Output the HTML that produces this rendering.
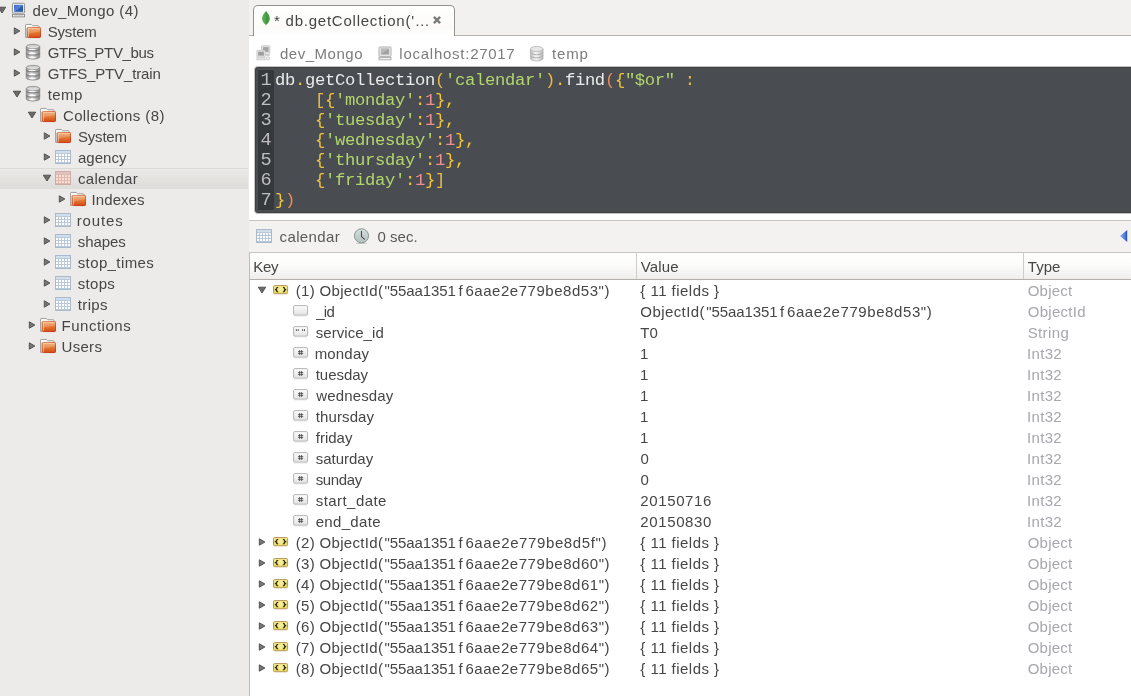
<!DOCTYPE html>
<html><head><meta charset="utf-8"><title>Robomongo</title>
<style>
html,body{margin:0;padding:0;width:1131px;height:696px;overflow:hidden}
body{width:1131px;height:696px;position:relative;overflow:hidden;background:#fff;font-family:"Liberation Sans",sans-serif;font-size:15px}
div,span,svg{position:absolute}
#side{left:0;top:0;width:249px;height:696px;background:#ecebe9}
#sel{left:0;top:168px;width:248px;height:21px;box-sizing:border-box;border-top:1px solid #dbdad7;background:linear-gradient(#eae9e7,#dedcd9)}
#tabbar{left:249px;top:0;width:882px;height:35px;background:#f2f1f0;border-bottom:1px solid #b6b3ae}
#tab{left:253px;top:5px;width:202px;height:31px;box-sizing:border-box;border:1px solid #939290;border-bottom:none;border-radius:5px 5px 0 0;background:linear-gradient(#fff,#fbfaf9 70%,#fff)}
#editor{left:254px;top:66px;width:877px;height:148px;background:#494c50;border-radius:4px 0 0 4px;border:1px solid #c4c2bf;border-right:none;box-sizing:border-box;box-shadow:inset 1px 1px 0 #3f4245,inset 0 -1px 0 #3f4245}
#gutter{left:3px;top:3px;width:16px;height:140px;background:#36393c}
.ln,.cl{font-family:"Liberation Mono",monospace;font-size:17.2px;letter-spacing:-.32px;line-height:20px;height:20px;white-space:pre}
.ln{left:258px;width:16px;color:#bdbdbd;font-size:18.6px;letter-spacing:0}
.ln .no{left:2.6px;top:1.7px}
.cl{left:275px;color:#ececec;padding-top:1.5px}
.cl span{position:static}
#rbar{left:249px;top:220px;width:882px;height:32px;background:#f3f2f1;border-top:1px solid #c6c4c0;box-sizing:content-box}
#thead{left:250px;top:252px;width:881px;height:26px;border-top:1px solid #c9c6c1;border-bottom:1px solid #b3afa9;background:linear-gradient(#fff,#fcfcfb 45%,#efeeec)}
#thead i{position:absolute;top:0;width:1px;height:26px;background:#d0cdc8}
#tleft{left:249px;top:252px;width:1px;height:444px;background:#bfbcb7}
.t{white-space:pre;line-height:21px;height:21px}
.i{overflow:visible}
#code,#txt{left:0;top:0;width:1131px;height:696px;will-change:transform}

</style></head>
<body>
<svg width="0" height="0" style="position:absolute">
<defs>
<linearGradient id="gfo" x1="0" y1="0" x2="0" y2="1"><stop offset="0" stop-color="#efa96f"/><stop offset=".5" stop-color="#e27a34"/><stop offset="1" stop-color="#d54a14"/></linearGradient>
<linearGradient id="gfs" x1="0" y1="0" x2=".6" y2="1"><stop offset="0" stop-color="#e0824f"/><stop offset="1" stop-color="#c42c0a"/></linearGradient>
<linearGradient id="gsc" x1="0" y1="0" x2="1" y2="1"><stop offset="0" stop-color="#3c6cc4"/><stop offset=".5" stop-color="#5a86d0"/><stop offset=".55" stop-color="#2f5cb4"/><stop offset="1" stop-color="#2a55ad"/></linearGradient>
<linearGradient id="gdb" x1="0" y1="0" x2="1" y2="0"><stop offset="0" stop-color="#949494"/><stop offset=".42" stop-color="#eeeeee"/><stop offset="1" stop-color="#868686"/></linearGradient>
<linearGradient id="gdt" x1="0" y1="0" x2="0" y2="1"><stop offset="0" stop-color="#c2c2c2"/><stop offset="1" stop-color="#ececec"/></linearGradient>
<linearGradient id="gdbl" x1="0" y1="0" x2="1" y2="0"><stop offset="0" stop-color="#bdbdbd"/><stop offset=".45" stop-color="#f8f8f8"/><stop offset="1" stop-color="#b8b8b8"/></linearGradient>
<linearGradient id="gob" x1="0" y1="0" x2="0" y2="1"><stop offset="0" stop-color="#f5eb8e"/><stop offset="1" stop-color="#e5d658"/></linearGradient>
<linearGradient id="gfl" x1="0" y1="0" x2="0" y2="1"><stop offset="0" stop-color="#fdfdfd"/><stop offset="1" stop-color="#e2e2e2"/></linearGradient>
<linearGradient id="gck" x1="0" y1="0" x2="0" y2="1"><stop offset="0" stop-color="#d6dfde"/><stop offset="1" stop-color="#b3c1bf"/></linearGradient>
<linearGradient id="gtr" x1="0" y1="0" x2="1" y2="0"><stop offset="0" stop-color="#8db0ec"/><stop offset=".7" stop-color="#4a7ad8"/><stop offset="1" stop-color="#1a48b4"/></linearGradient>
<linearGradient id="glf" x1="0" y1="0" x2="1" y2="0"><stop offset="0" stop-color="#58b04e"/><stop offset=".5" stop-color="#4da548"/><stop offset=".52" stop-color="#3f9440"/><stop offset="1" stop-color="#46a046"/></linearGradient>

<symbol id="ac" overflow="visible"><path d="M1.3 1.8 L6.9 5 L1.3 8.2 Z" fill="#777775" stroke="#4a4a48" stroke-width=".9" stroke-linejoin="round"/></symbol>
<symbol id="ae" overflow="visible"><path d="M1.3 1.2 L8.7 1.2 L5 7 Z" fill="#6c6c6a" stroke="#4a4a48" stroke-width=".9" stroke-linejoin="round"/></symbol>

<symbol id="pc" overflow="visible">
 <rect x="2.45" y="3.25" width="12.1" height="9.8" rx="1" fill="#f7f7f6" stroke="#858582" stroke-width=".9"/>
 <rect x="4" y="4.8" width="9.1" height="7" fill="url(#gsc)"/>
 <rect x="2.45" y="14.35" width="12.1" height="2.5" fill="#f6f6f5" stroke="#858582" stroke-width=".9"/>
 <rect x="4" y="15.2" width="9" height=".8" fill="#cfcfcd"/>
</symbol>

<symbol id="folder" overflow="visible">
 <path d="M.6 16.4 V4.1 Q.6 3.45 1.25 3.45 H6.3 L7.5 4.75 H13.2 Q13.9 4.75 13.9 5.4 V7 H2 V16.4 Z" fill="#fefefe" stroke="#8e8e8b" stroke-width=".85" stroke-linejoin="round"/>
 <rect x="2.45" y="6.45" width="13" height="10.1" rx=".7" fill="url(#gfo)" stroke="url(#gfs)" stroke-width=".9"/>
 <path d="M3 7 H15 V10.2 L3 12.8 Z" fill="#fff" opacity=".16"/>
 <path d="M3.4 15.8 V7.4 H14.6" fill="none" stroke="#fbd6b4" stroke-width=".8" opacity=".85"/>
</symbol>

<symbol id="db" overflow="visible">
 <path d="M1.3 4.5 V14.9 A6.7 2.1 0 0 0 14.7 14.9 V4.5 Z" fill="url(#gdb)"/>
 <ellipse cx="8" cy="4.5" rx="6.7" ry="2.15" fill="url(#gdt)" stroke="#8a8a8a" stroke-width=".8"/>
 <ellipse cx="7.2" cy="7.5" rx="3.4" ry=".85" fill="#fff" opacity=".9"/>
 <ellipse cx="7.2" cy="11.7" rx="3.4" ry=".85" fill="#fff" opacity=".9"/>
 <ellipse cx="7.2" cy="15.8" rx="3.4" ry=".85" fill="#fff" opacity=".9"/>
 <path d="M1.3 6.7 A6.7 2.1 0 0 0 14.7 6.7" fill="none" stroke="#787878" stroke-width="1.15"/>
 <path d="M1.3 10.9 A6.7 2.1 0 0 0 14.7 10.9" fill="none" stroke="#787878" stroke-width="1.15"/>
 <path d="M1.3 4.5 V14.9 A6.7 2.1 0 0 0 14.7 14.9 V4.5" fill="none" stroke="#848484" stroke-width=".85"/>
</symbol>
<symbol id="dbg" overflow="visible">
 <path d="M1.4 4 V13.4 A6.3 2.5 0 0 0 14 13.4 V4 Z" fill="url(#gdbl)"/>
 <ellipse cx="7.7" cy="4" rx="6.3" ry="2.6" fill="#e6e6e6" stroke="#b4b4b4" stroke-width=".8"/>
 <path d="M1.4 7.2 A6.3 2.5 0 0 0 14 7.2" fill="none" stroke="#adadad" stroke-width="1"/>
 <path d="M1.4 10.3 A6.3 2.5 0 0 0 14 10.3" fill="none" stroke="#adadad" stroke-width="1"/>
 <path d="M1.4 4 V13.4 A6.3 2.5 0 0 0 14 13.4 V4" fill="none" stroke="#b4b4b4" stroke-width=".8"/>
</symbol>

<symbol id="tbl" overflow="visible">
 <rect x="0" y="0" width="16" height="14" fill="#b9c9d9"/>
 <rect x=".5" y=".5" width="15" height="13" fill="none" stroke="#a8bacc"/>
 <rect x="1" y="1" width="14" height="2" fill="#d1deeb"/>
 <g fill="#fff"><rect x="1" y="4" width="2" height="2"/><rect x="4" y="4" width="2" height="2"/><rect x="7" y="4" width="2" height="2"/><rect x="10" y="4" width="2" height="2"/><rect x="13" y="4" width="2" height="2"/>
 <rect x="1" y="7" width="2" height="2"/><rect x="4" y="7" width="2" height="2"/><rect x="7" y="7" width="2" height="2"/><rect x="10" y="7" width="2" height="2"/><rect x="13" y="7" width="2" height="2"/>
 <rect x="1" y="10" width="2" height="2"/><rect x="4" y="10" width="2" height="2"/><rect x="7" y="10" width="2" height="2"/><rect x="10" y="10" width="2" height="2"/><rect x="13" y="10" width="2" height="2"/></g>
</symbol>
<symbol id="tblsel" overflow="visible">
 <rect x="0" y="0" width="16" height="14" fill="#d9bab3"/>
 <rect x=".5" y=".5" width="15" height="13" fill="none" stroke="#ccada6"/>
 <rect x="1" y="1" width="14" height="2" fill="#e0c5be"/>
 <g fill="#ffdccf"><rect x="1" y="4" width="2" height="2"/><rect x="4" y="4" width="2" height="2"/><rect x="7" y="4" width="2" height="2"/><rect x="10" y="4" width="2" height="2"/><rect x="13" y="4" width="2" height="2"/>
 <rect x="1" y="7" width="2" height="2"/><rect x="4" y="7" width="2" height="2"/><rect x="7" y="7" width="2" height="2"/><rect x="10" y="7" width="2" height="2"/><rect x="13" y="7" width="2" height="2"/>
 <rect x="1" y="10" width="2" height="2"/><rect x="4" y="10" width="2" height="2"/><rect x="7" y="10" width="2" height="2"/><rect x="10" y="10" width="2" height="2"/><rect x="13" y="10" width="2" height="2"/></g>
</symbol>

<symbol id="obj" overflow="visible">
 <rect x=".5" y=".55" width="14.1" height="8.2" rx="1.2" fill="url(#gob)" stroke="#b3925a" stroke-width=".95"/>
 <ellipse cx="7.5" cy="4.7" rx="2.4" ry="3" fill="#fbf5b0" opacity=".55"/>
 <path d="M5.2 2.5 H4.3 Q3.7 2.5 3.7 3.2 V4 L2.3 4.6 L3.7 5.2 V6 Q3.7 6.7 4.3 6.7 H5.2 M9.9 2.5 H10.8 Q11.4 2.5 11.4 3.2 V4 L12.8 4.6 L11.4 5.2 V6 Q11.4 6.7 10.8 6.7 H9.9" fill="none" stroke="#2b2a14" stroke-width="1.15" stroke-linejoin="round"/>
</symbol>
<symbol id="fld" overflow="visible">
 <rect x=".6" y=".6" width="14" height="9.6" rx="1.3" fill="url(#gfl)" stroke="#adadad" stroke-width=".9"/>
 <path d="M1.2 10.9 H14" stroke="#d9d9d9" stroke-width=".8"/>
</symbol>
<symbol id="str" overflow="visible">
 <rect x=".6" y=".6" width="14" height="9.6" rx="1.3" fill="url(#gfl)" stroke="#adadad" stroke-width=".9"/>
 <path d="M1.2 10.9 H14" stroke="#d9d9d9" stroke-width=".8"/>
 <path d="M3.4 3.2 V5 M5.3 3.2 V5 M9.6 3.2 V5 M11.5 3.2 V5" stroke="#555" stroke-width="1"/>
</symbol>
<symbol id="num" overflow="visible">
 <rect x=".6" y=".6" width="14" height="9.6" rx="1.3" fill="url(#gfl)" stroke="#adadad" stroke-width=".9"/>
 <path d="M1.2 10.9 H14" stroke="#d9d9d9" stroke-width=".8"/>
 <path d="M6.6 3 V8 M8.6 3 V8 M5 4.6 H10.2 M5 6.4 H10.2" stroke="#555" stroke-width=".9"/>
</symbol>

<symbol id="leaf" overflow="visible">
 <rect x="4.5" y="14.4" width=".9" height="2.1" fill="#e6dfc8"/>
 <path d="M4.95 1.1 C7.2 3.8 8.8 6.2 8.8 8.6 C8.8 11.6 6.9 13.8 4.95 14.9 C3 13.8 1.1 11.6 1.1 8.6 C1.1 6.2 2.7 3.8 4.95 1.1 Z" fill="url(#glf)"/>
</symbol>
<symbol id="x" overflow="visible">
 <path d="M1.9 1.9 L8.1 8.1 M8.1 1.9 L1.9 8.1" stroke="#7d7d79" stroke-width="2.5" stroke-linecap="butt"/>
</symbol>
<symbol id="conn" overflow="visible">
 <rect x="5.6" y=".8" width="8.2" height="8.8" rx=".6" fill="#e6e6e6" stroke="#c6c6c6" stroke-width=".9"/>
 <rect x="7" y="2.1" width="5.6" height="5" fill="#a3a3a3"/>
 <rect x=".9" y="5.4" width="8.2" height="6.6" rx=".6" fill="#e9e9e9" stroke="#c6c6c6" stroke-width=".9"/>
 <rect x="2.1" y="6.7" width="5.8" height="4" fill="#9e9e9e"/>
 <rect x=".9" y="12.7" width="8.2" height="2.2" fill="#e4e4e4" stroke="#cacaca" stroke-width=".8"/>
 <path d="M9.6 10.6 H13.6 M9.6 13.8 H11" stroke="#c8c8c8" stroke-width="1"/>
 <circle cx="12.1" cy="13.3" r="1.6" fill="#f2f2f2" stroke="#c6c6c6" stroke-width=".8"/>
</symbol>
<symbol id="mon" overflow="visible">
 <rect x="1" y="1" width="12" height="9.4" rx=".8" fill="#ededed" stroke="#a9a9a9" stroke-width=".9"/>
 <rect x="2.8" y="2.6" width="8.4" height="6" fill="#a3a3a3"/>
 <path d="M3 7.5 L10.8 3 V2.8 H3 Z" fill="#b9b9b9"/>
 <rect x="1" y="11.4" width="12" height="2.4" fill="#f0f0f0" stroke="#a9a9a9" stroke-width=".9"/>
</symbol>
<symbol id="clock" overflow="visible">
 <ellipse cx="8.5" cy="16.2" rx="5.8" ry=".8" fill="#c9c9c6"/>
 <circle cx="8.5" cy="8.8" r="7.05" fill="url(#gck)" stroke="#818d8b" stroke-width=".9"/>
 <path d="M8.5 4.3 V9.6 L11.4 12.1" fill="none" stroke="#454a48" stroke-width="1.1" stroke-linecap="round"/>
</symbol>
<symbol id="tri" overflow="visible">
 <path d="M1 7 L8.2 1 V13 Z" fill="url(#gtr)"/>
</symbol>
</defs>
</svg>

<div id="side"></div>
<div id="sel"></div>
<div id="tabbar"></div>
<div id="tab"></div>
<div id="editor"><div id="gutter"></div></div>
<div id="code"><div class="ln" style="top:69px"><span class="no">1</span></div><div class="cl" style="top:69px"><span style="color:#ebebeb">db</span><span style="color:#f2c53c">.</span><span style="color:#ebebeb">getCollection</span><span style="color:#eeb846">(</span><span style="color:#b3d66c">&#x27;calendar&#x27;</span><span style="color:#eeb846">)</span><span style="color:#f2c53c">.</span><span style="color:#ebebeb">find</span><span style="color:#e98a5c">(</span><span style="color:#f2c53c">{</span><span style="color:#b3d66c">&quot;$or&quot;</span> <span style="color:#eeb846">:</span></div><div class="ln" style="top:89px"><span class="no">2</span></div><div class="cl" style="top:89px">    <span style="color:#eeb846">[</span><span style="color:#f2c53c">{</span><span style="color:#b3d66c">&#x27;monday&#x27;</span><span style="color:#f2c53c">:</span><span style="color:#ef9090">1</span><span style="color:#f2c53c">}</span><span style="color:#f2c53c">,</span></div><div class="ln" style="top:109px"><span class="no">3</span></div><div class="cl" style="top:109px">    <span style="color:#f2c53c">{</span><span style="color:#b3d66c">&#x27;tuesday&#x27;</span><span style="color:#f2c53c">:</span><span style="color:#ef9090">1</span><span style="color:#f2c53c">}</span><span style="color:#f2c53c">,</span></div><div class="ln" style="top:129px"><span class="no">4</span></div><div class="cl" style="top:129px">    <span style="color:#f2c53c">{</span><span style="color:#b3d66c">&#x27;wednesday&#x27;</span><span style="color:#f2c53c">:</span><span style="color:#ef9090">1</span><span style="color:#f2c53c">}</span><span style="color:#f2c53c">,</span></div><div class="ln" style="top:149px"><span class="no">5</span></div><div class="cl" style="top:149px">    <span style="color:#f2c53c">{</span><span style="color:#b3d66c">&#x27;thursday&#x27;</span><span style="color:#f2c53c">:</span><span style="color:#ef9090">1</span><span style="color:#f2c53c">}</span><span style="color:#f2c53c">,</span></div><div class="ln" style="top:169px"><span class="no">6</span></div><div class="cl" style="top:169px">    <span style="color:#f2c53c">{</span><span style="color:#b3d66c">&#x27;friday&#x27;</span><span style="color:#f2c53c">:</span><span style="color:#ef9090">1</span><span style="color:#f2c53c">}</span><span style="color:#eeb846">]</span></div><div class="ln" style="top:189px"><span class="no">7</span></div><div class="cl" style="top:189px"><span style="color:#f2c53c">}</span><span style="color:#e98a5c">)</span></div></div>
<div id="rbar"></div>
<div id="thead"><i style="left:386px"></i><i style="left:773px"></i></div>
<div id="tleft"></div>
<svg class="i" style="left:-2.9000000000000004px;top:6.3px" width="10" height="8"><use href="#ae"/></svg><svg class="i" style="left:10px;top:0px" width="18" height="21"><use href="#pc"/></svg><svg class="i" style="left:13.0px;top:26.2px" width="8" height="10"><use href="#ac"/></svg><svg class="i" style="left:25px;top:21px" width="18" height="21"><use href="#folder"/></svg><svg class="i" style="left:13.0px;top:47.2px" width="8" height="10"><use href="#ac"/></svg><svg class="i" style="left:25px;top:42px" width="16" height="18"><use href="#db"/></svg><svg class="i" style="left:13.0px;top:68.2px" width="8" height="10"><use href="#ac"/></svg><svg class="i" style="left:25px;top:63px" width="16" height="18"><use href="#db"/></svg><svg class="i" style="left:12.1px;top:90.3px" width="10" height="8"><use href="#ae"/></svg><svg class="i" style="left:25px;top:84px" width="16" height="18"><use href="#db"/></svg><svg class="i" style="left:27.1px;top:111.3px" width="10" height="8"><use href="#ae"/></svg><svg class="i" style="left:40px;top:105px" width="18" height="21"><use href="#folder"/></svg><svg class="i" style="left:43.0px;top:131.2px" width="8" height="10"><use href="#ac"/></svg><svg class="i" style="left:55px;top:126px" width="18" height="21"><use href="#folder"/></svg><svg class="i" style="left:43.0px;top:152.2px" width="8" height="10"><use href="#ac"/></svg><svg class="i" style="left:55px;top:150px" width="16" height="14"><use href="#tbl"/></svg><svg class="i" style="left:42.1px;top:174.3px" width="10" height="8"><use href="#ae"/></svg><svg class="i" style="left:55px;top:171px" width="16" height="14"><use href="#tblsel"/></svg><svg class="i" style="left:58.0px;top:194.2px" width="8" height="10"><use href="#ac"/></svg><svg class="i" style="left:70px;top:189px" width="18" height="21"><use href="#folder"/></svg><svg class="i" style="left:43.0px;top:215.2px" width="8" height="10"><use href="#ac"/></svg><svg class="i" style="left:55px;top:213px" width="16" height="14"><use href="#tbl"/></svg><svg class="i" style="left:43.0px;top:236.2px" width="8" height="10"><use href="#ac"/></svg><svg class="i" style="left:55px;top:234px" width="16" height="14"><use href="#tbl"/></svg><svg class="i" style="left:43.0px;top:257.2px" width="8" height="10"><use href="#ac"/></svg><svg class="i" style="left:55px;top:255px" width="16" height="14"><use href="#tbl"/></svg><svg class="i" style="left:43.0px;top:278.2px" width="8" height="10"><use href="#ac"/></svg><svg class="i" style="left:55px;top:276px" width="16" height="14"><use href="#tbl"/></svg><svg class="i" style="left:43.0px;top:299.2px" width="8" height="10"><use href="#ac"/></svg><svg class="i" style="left:55px;top:297px" width="16" height="14"><use href="#tbl"/></svg><svg class="i" style="left:28.0px;top:320.2px" width="8" height="10"><use href="#ac"/></svg><svg class="i" style="left:40px;top:315px" width="18" height="21"><use href="#folder"/></svg><svg class="i" style="left:28.0px;top:341.2px" width="8" height="10"><use href="#ac"/></svg><svg class="i" style="left:40px;top:336px" width="18" height="21"><use href="#folder"/></svg><svg class="i" style="left:257.3px;top:286.1px" width="10" height="8"><use href="#ae"/></svg><svg class="i" style="left:273px;top:284.8px" width="15" height="10"><use href="#obj"/></svg><svg class="i" style="left:293px;top:304.9px" width="16" height="13"><use href="#fld"/></svg><svg class="i" style="left:293px;top:325.9px" width="16" height="13"><use href="#str"/></svg><svg class="i" style="left:293px;top:346.9px" width="16" height="13"><use href="#num"/></svg><svg class="i" style="left:293px;top:367.9px" width="16" height="13"><use href="#num"/></svg><svg class="i" style="left:293px;top:388.9px" width="16" height="13"><use href="#num"/></svg><svg class="i" style="left:293px;top:409.9px" width="16" height="13"><use href="#num"/></svg><svg class="i" style="left:293px;top:430.9px" width="16" height="13"><use href="#num"/></svg><svg class="i" style="left:293px;top:451.9px" width="16" height="13"><use href="#num"/></svg><svg class="i" style="left:293px;top:472.9px" width="16" height="13"><use href="#num"/></svg><svg class="i" style="left:293px;top:493.9px" width="16" height="13"><use href="#num"/></svg><svg class="i" style="left:293px;top:514.9px" width="16" height="13"><use href="#num"/></svg><svg class="i" style="left:258px;top:537.3px" width="8" height="10"><use href="#ac"/></svg><svg class="i" style="left:273px;top:536.8px" width="15" height="10"><use href="#obj"/></svg><svg class="i" style="left:258px;top:558.3px" width="8" height="10"><use href="#ac"/></svg><svg class="i" style="left:273px;top:557.8px" width="15" height="10"><use href="#obj"/></svg><svg class="i" style="left:258px;top:579.3px" width="8" height="10"><use href="#ac"/></svg><svg class="i" style="left:273px;top:578.8px" width="15" height="10"><use href="#obj"/></svg><svg class="i" style="left:258px;top:600.3px" width="8" height="10"><use href="#ac"/></svg><svg class="i" style="left:273px;top:599.8px" width="15" height="10"><use href="#obj"/></svg><svg class="i" style="left:258px;top:621.3px" width="8" height="10"><use href="#ac"/></svg><svg class="i" style="left:273px;top:620.8px" width="15" height="10"><use href="#obj"/></svg><svg class="i" style="left:258px;top:642.3px" width="8" height="10"><use href="#ac"/></svg><svg class="i" style="left:273px;top:641.8px" width="15" height="10"><use href="#obj"/></svg><svg class="i" style="left:258px;top:663.3px" width="8" height="10"><use href="#ac"/></svg><svg class="i" style="left:273px;top:662.8px" width="15" height="10"><use href="#obj"/></svg><svg class="i" style="left:261px;top:10px" width="10" height="18"><use href="#leaf"/></svg><svg class="i" style="left:432px;top:15px" width="10" height="10"><use href="#x"/></svg><svg class="i" style="left:256px;top:45px" width="15" height="16"><use href="#conn"/></svg><svg class="i" style="left:378px;top:46px" width="15" height="15"><use href="#mon"/></svg><svg class="i" style="left:529px;top:45px" width="16" height="16"><use href="#dbg"/></svg><svg class="i" style="left:256px;top:229px" width="16" height="14"><use href="#tbl"/></svg><svg class="i" style="left:353px;top:227px" width="17" height="17"><use href="#clock"/></svg><svg class="i" style="left:1119px;top:229px" width="9" height="14"><use href="#tri"/></svg>
<div id="txt"><span class="t" style="left:32.60px;top:0px;letter-spacing:0.417px;color:#464646">dev_Mongo (4)</span><span class="t" style="left:47.70px;top:21px;letter-spacing:-0.183px;color:#464646">System</span><span class="t" style="left:47.70px;top:42px;letter-spacing:-0.331px;color:#464646">GTFS_PTV_bus</span><span class="t" style="left:47.70px;top:63px;letter-spacing:-0.153px;color:#464646">GTFS_PTV_train</span><span class="t" style="left:47.70px;top:84px;letter-spacing:0.432px;color:#464646">temp</span><span class="t" style="left:62.90px;top:105px;letter-spacing:0.402px;color:#464646">Collections (8)</span><span class="t" style="left:78.00px;top:126px;letter-spacing:-0.203px;color:#464646">System</span><span class="t" style="left:78.00px;top:147px;letter-spacing:0.006px;color:#464646">agency</span><span class="t" style="left:78.00px;top:168px;letter-spacing:0.308px;color:#464646">calendar</span><span class="t" style="left:91.60px;top:189px;letter-spacing:0.061px;color:#464646">Indexes</span><span class="t" style="left:76.70px;top:210px;letter-spacing:0.862px;color:#464646">routes</span><span class="t" style="left:77.70px;top:231px;letter-spacing:-0.054px;color:#464646">shapes</span><span class="t" style="left:77.70px;top:252px;letter-spacing:0.396px;color:#464646">stop_times</span><span class="t" style="left:77.70px;top:273px;letter-spacing:0.312px;color:#464646">stops</span><span class="t" style="left:77.70px;top:294px;letter-spacing:0.391px;color:#464646">trips</span><span class="t" style="left:61.50px;top:315px;letter-spacing:0.521px;color:#464646">Functions</span><span class="t" style="left:61.50px;top:336px;letter-spacing:0.308px;color:#464646">Users</span><span class="t" style="left:274.00px;top:10px;letter-spacing:0.768px;color:#464646">* db.getCollection(&#x27;…</span><span class="t" style="left:279.90px;top:43px;letter-spacing:0.531px;color:#7c7c7c">dev_Mongo</span><span class="t" style="left:399.30px;top:43px;letter-spacing:0.755px;color:#7c7c7c">localhost:</span><span class="t" style="left:470.20px;top:43px;letter-spacing:0.683px;color:#7c7c7c">27017</span><span class="t" style="left:552.10px;top:43px;letter-spacing:0.798px;color:#7c7c7c">temp</span><span class="t" style="left:279.60px;top:226px;letter-spacing:0.365px;color:#595959">calendar</span><span class="t" style="left:377.40px;top:226px;letter-spacing:0.070px;color:#595959">0 sec.</span><span class="t" style="left:253.30px;top:256px;letter-spacing:-0.324px;color:#464646">Key</span><span class="t" style="left:640.80px;top:256px;letter-spacing:0.123px;color:#464646">Value</span><span class="t" style="left:1027.80px;top:256px;letter-spacing:0.041px;color:#464646">Type</span><span class="t" style="left:295.80px;top:280px;letter-spacing:0.312px;color:#464646">(1) ObjectId(</span><span class="t" style="left:384.60px;top:280px;letter-spacing:-0.090px;color:#464646">&quot;55aa1351</span><span class="t" style="left:458.50px;top:280px;letter-spacing:0.000px;color:#464646">f</span><span class="t" style="left:465.40px;top:280px;letter-spacing:0.540px;color:#464646">6aae2e779be8d53&quot;)</span><span class="t" style="left:640.30px;top:280px;letter-spacing:0.475px;color:#464646">{ 11 fields }</span><span class="t" style="left:1027.70px;top:280px;letter-spacing:0.223px;color:#a7a7ad">Object</span><span class="t" style="left:316.30px;top:301px;letter-spacing:-0.787px;color:#464646">_id</span><span class="t" style="left:640.30px;top:301px;letter-spacing:0.417px;color:#464646">ObjectId(</span><span class="t" style="left:706.20px;top:301px;letter-spacing:-0.090px;color:#464646">&quot;55aa1351</span><span class="t" style="left:780.10px;top:301px;letter-spacing:0.000px;color:#464646">f</span><span class="t" style="left:787.00px;top:301px;letter-spacing:0.578px;color:#464646">6aae2e779be8d53&quot;)</span><span class="t" style="left:1027.70px;top:301px;letter-spacing:0.297px;color:#a7a7ad">ObjectId</span><span class="t" style="left:315.70px;top:322px;letter-spacing:0.057px;color:#464646">service_id</span><span class="t" style="left:640.30px;top:322px;letter-spacing:-0.063px;color:#464646">T0</span><span class="t" style="left:1027.70px;top:322px;letter-spacing:0.372px;color:#a7a7ad">String</span><span class="t" style="left:314.70px;top:343px;letter-spacing:0.167px;color:#464646">monday</span><span class="t" style="left:640.10px;top:343px;letter-spacing:0.000px;color:#464646">1</span><span class="t" style="left:1027.00px;top:343px;letter-spacing:0.320px;color:#a7a7ad">Int32</span><span class="t" style="left:315.70px;top:364px;letter-spacing:-0.023px;color:#464646">tuesday</span><span class="t" style="left:640.10px;top:364px;letter-spacing:0.000px;color:#464646">1</span><span class="t" style="left:1027.00px;top:364px;letter-spacing:0.320px;color:#a7a7ad">Int32</span><span class="t" style="left:316.30px;top:385px;letter-spacing:0.127px;color:#464646">wednesday</span><span class="t" style="left:640.10px;top:385px;letter-spacing:0.000px;color:#464646">1</span><span class="t" style="left:1027.00px;top:385px;letter-spacing:0.320px;color:#a7a7ad">Int32</span><span class="t" style="left:315.70px;top:406px;letter-spacing:0.124px;color:#464646">thursday</span><span class="t" style="left:640.10px;top:406px;letter-spacing:0.000px;color:#464646">1</span><span class="t" style="left:1027.00px;top:406px;letter-spacing:0.320px;color:#a7a7ad">Int32</span><span class="t" style="left:315.70px;top:427px;letter-spacing:0.024px;color:#464646">friday</span><span class="t" style="left:640.10px;top:427px;letter-spacing:0.000px;color:#464646">1</span><span class="t" style="left:1027.00px;top:427px;letter-spacing:0.320px;color:#a7a7ad">Int32</span><span class="t" style="left:315.70px;top:448px;letter-spacing:-0.005px;color:#464646">saturday</span><span class="t" style="left:640.60px;top:448px;letter-spacing:0.000px;color:#464646">0</span><span class="t" style="left:1027.00px;top:448px;letter-spacing:0.320px;color:#a7a7ad">Int32</span><span class="t" style="left:315.70px;top:469px;letter-spacing:-0.374px;color:#464646">sunday</span><span class="t" style="left:640.60px;top:469px;letter-spacing:0.000px;color:#464646">0</span><span class="t" style="left:1027.00px;top:469px;letter-spacing:0.320px;color:#a7a7ad">Int32</span><span class="t" style="left:315.70px;top:490px;letter-spacing:0.448px;color:#464646">start_date</span><span class="t" style="left:640.20px;top:490px;letter-spacing:0.643px;color:#464646">20150716</span><span class="t" style="left:1027.00px;top:490px;letter-spacing:0.320px;color:#a7a7ad">Int32</span><span class="t" style="left:315.70px;top:511px;letter-spacing:0.326px;color:#464646">end_date</span><span class="t" style="left:640.20px;top:511px;letter-spacing:0.643px;color:#464646">20150830</span><span class="t" style="left:1027.00px;top:511px;letter-spacing:0.320px;color:#a7a7ad">Int32</span><span class="t" style="left:295.80px;top:532px;letter-spacing:0.312px;color:#464646">(2) ObjectId(</span><span class="t" style="left:384.60px;top:532px;letter-spacing:-0.090px;color:#464646">&quot;55aa1351</span><span class="t" style="left:458.50px;top:532px;letter-spacing:0.000px;color:#464646">f</span><span class="t" style="left:465.40px;top:532px;letter-spacing:0.607px;color:#464646">6aae2e779be8d5f&quot;)</span><span class="t" style="left:640.30px;top:532px;letter-spacing:0.475px;color:#464646">{ 11 fields }</span><span class="t" style="left:1027.70px;top:532px;letter-spacing:0.223px;color:#a7a7ad">Object</span><span class="t" style="left:295.80px;top:553px;letter-spacing:0.312px;color:#464646">(3) ObjectId(</span><span class="t" style="left:384.60px;top:553px;letter-spacing:-0.090px;color:#464646">&quot;55aa1351</span><span class="t" style="left:458.50px;top:553px;letter-spacing:0.000px;color:#464646">f</span><span class="t" style="left:465.40px;top:553px;letter-spacing:0.546px;color:#464646">6aae2e779be8d60&quot;)</span><span class="t" style="left:640.30px;top:553px;letter-spacing:0.475px;color:#464646">{ 11 fields }</span><span class="t" style="left:1027.70px;top:553px;letter-spacing:0.223px;color:#a7a7ad">Object</span><span class="t" style="left:295.80px;top:574px;letter-spacing:0.312px;color:#464646">(4) ObjectId(</span><span class="t" style="left:384.60px;top:574px;letter-spacing:-0.090px;color:#464646">&quot;55aa1351</span><span class="t" style="left:458.50px;top:574px;letter-spacing:0.000px;color:#464646">f</span><span class="t" style="left:465.40px;top:574px;letter-spacing:0.546px;color:#464646">6aae2e779be8d61&quot;)</span><span class="t" style="left:640.30px;top:574px;letter-spacing:0.475px;color:#464646">{ 11 fields }</span><span class="t" style="left:1027.70px;top:574px;letter-spacing:0.223px;color:#a7a7ad">Object</span><span class="t" style="left:295.80px;top:595px;letter-spacing:0.312px;color:#464646">(5) ObjectId(</span><span class="t" style="left:384.60px;top:595px;letter-spacing:-0.090px;color:#464646">&quot;55aa1351</span><span class="t" style="left:458.50px;top:595px;letter-spacing:0.000px;color:#464646">f</span><span class="t" style="left:465.40px;top:595px;letter-spacing:0.546px;color:#464646">6aae2e779be8d62&quot;)</span><span class="t" style="left:640.30px;top:595px;letter-spacing:0.475px;color:#464646">{ 11 fields }</span><span class="t" style="left:1027.70px;top:595px;letter-spacing:0.223px;color:#a7a7ad">Object</span><span class="t" style="left:295.80px;top:616px;letter-spacing:0.312px;color:#464646">(6) ObjectId(</span><span class="t" style="left:384.60px;top:616px;letter-spacing:-0.090px;color:#464646">&quot;55aa1351</span><span class="t" style="left:458.50px;top:616px;letter-spacing:0.000px;color:#464646">f</span><span class="t" style="left:465.40px;top:616px;letter-spacing:0.546px;color:#464646">6aae2e779be8d63&quot;)</span><span class="t" style="left:640.30px;top:616px;letter-spacing:0.475px;color:#464646">{ 11 fields }</span><span class="t" style="left:1027.70px;top:616px;letter-spacing:0.223px;color:#a7a7ad">Object</span><span class="t" style="left:295.80px;top:637px;letter-spacing:0.312px;color:#464646">(7) ObjectId(</span><span class="t" style="left:384.60px;top:637px;letter-spacing:-0.090px;color:#464646">&quot;55aa1351</span><span class="t" style="left:458.50px;top:637px;letter-spacing:0.000px;color:#464646">f</span><span class="t" style="left:465.40px;top:637px;letter-spacing:0.546px;color:#464646">6aae2e779be8d64&quot;)</span><span class="t" style="left:640.30px;top:637px;letter-spacing:0.475px;color:#464646">{ 11 fields }</span><span class="t" style="left:1027.70px;top:637px;letter-spacing:0.223px;color:#a7a7ad">Object</span><span class="t" style="left:295.80px;top:658px;letter-spacing:0.312px;color:#464646">(8) ObjectId(</span><span class="t" style="left:384.60px;top:658px;letter-spacing:-0.090px;color:#464646">&quot;55aa1351</span><span class="t" style="left:458.50px;top:658px;letter-spacing:0.000px;color:#464646">f</span><span class="t" style="left:465.40px;top:658px;letter-spacing:0.546px;color:#464646">6aae2e779be8d65&quot;)</span><span class="t" style="left:640.30px;top:658px;letter-spacing:0.475px;color:#464646">{ 11 fields }</span><span class="t" style="left:1027.70px;top:658px;letter-spacing:0.223px;color:#a7a7ad">Object</span></div>
</body></html>
